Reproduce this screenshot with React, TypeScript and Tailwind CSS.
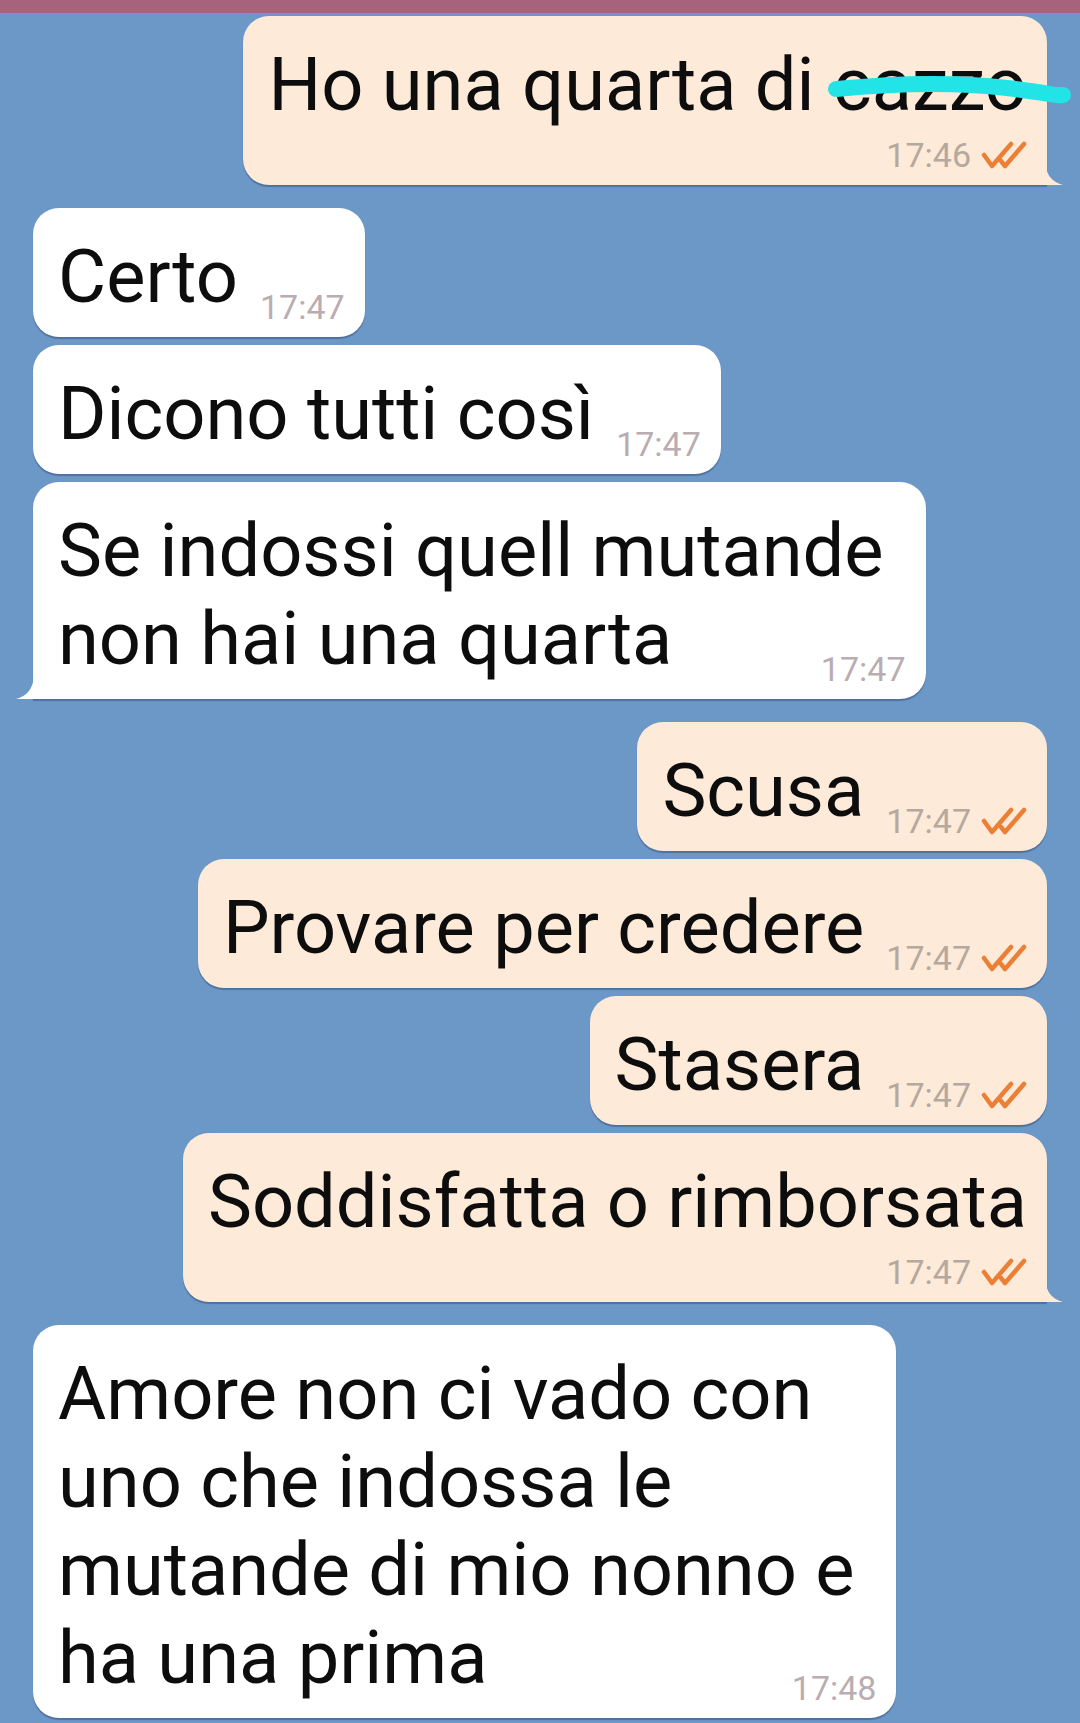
import clsx from "clsx";

type Msg = {
  out: boolean;
  lines: string[];
  time: string;
  below?: boolean;
  tail?: boolean;
  gap: "sm" | "lg" | "none";
};

const messages: Msg[] = [
  { out: true, lines: ["Ho una quarta di cazzo"], time: "17:46", below: true, tail: true, gap: "none" },
  { out: false, lines: ["Certo"], time: "17:47", gap: "lg" },
  { out: false, lines: ["Dicono tutti così"], time: "17:47", gap: "sm" },
  { out: false, lines: ["Se indossi quell mutande", "non hai una quarta"], time: "17:47", tail: true, gap: "sm" },
  { out: true, lines: ["Scusa"], time: "17:47", gap: "lg" },
  { out: true, lines: ["Provare per credere"], time: "17:47", gap: "sm" },
  { out: true, lines: ["Stasera"], time: "17:47", gap: "sm" },
  { out: true, lines: ["Soddisfatta o rimborsata"], time: "17:47", below: true, tail: true, gap: "sm" },
  {
    out: false,
    lines: ["Amore non ci vado con", "uno che indossa le", "mutande di mio nonno e", "ha una prima"],
    time: "17:48",
    gap: "lg",
  },
];

function Checks() {
  return (
    <svg width="46" height="28" viewBox="0 0 46 28" className="ml-[10px] shrink-0">
      <path d="M3 14 L11 25 L30 3" fill="none" stroke="#ec7f36" strokeWidth="4.5" strokeLinecap="round" strokeLinejoin="round" />
      <path d="M20 20 L24 25 L43 3" fill="none" stroke="#ec7f36" strokeWidth="4.5" strokeLinecap="round" strokeLinejoin="round" />
    </svg>
  );
}

function Time({ out, time }: { out: boolean; time: string }) {
  return (
    <span className="flex shrink-0 items-end">
      <span className={clsx("text-[34px] leading-[27px]", out ? "text-[#b5a89e]" : "text-[#b9adb2]")}>{time}</span>
      {out && <Checks />}
    </span>
  );
}

function Tail({ out }: { out: boolean }) {
  if (out) {
    return (
      <svg width="18" height="22" viewBox="0 0 18 22" className="absolute bottom-0 right-[-16px]">
        <path d="M0 0 Q2 18 18 22 L0 22 Z" fill="#fdead8" />
      </svg>
    );
  }
  return (
    <svg width="18" height="22" viewBox="0 0 18 22" className="absolute bottom-0 left-[-17px]">
      <path d="M18 0 Q16 18 0 22 L18 22 Z" fill="#ffffff" />
    </svg>
  );
}

function Bubble({ m, index }: { m: Msg; index: number }) {
  const last = m.lines[m.lines.length - 1];
  const multi = m.lines.length > 1;
  return (
    <div
      className={clsx(
        "relative w-fit rounded-[26px] pb-[16px] pl-[25px] pr-[20px] pt-[25px] shadow-[0_2px_1px_rgba(35,55,95,0.4)]",
        m.out ? "self-end bg-[#fdead8]" : "self-start bg-white",
        m.tail && m.out && "rounded-br-none",
        m.tail && !m.out && "rounded-bl-none",
        m.gap === "sm" && "mt-[8px]",
        m.gap === "lg" && "mt-[23px]"
      )}
    >
      {m.lines.slice(0, -1).map((l) => (
        <div key={l} className={clsx("whitespace-nowrap", multi && "pr-[22px]")}>
          {l}
        </div>
      ))}
      {m.below ? (
        <>
          <div className="whitespace-nowrap">{last}</div>
          <div className="flex h-[40px] items-end justify-end">
            <Time out={m.out} time={m.time} />
          </div>
        </>
      ) : (
        <div className="flex items-end">
          <span className="whitespace-nowrap">{last}</span>
          <span className="ml-auto pl-[22px]">
            <Time out={m.out} time={m.time} />
          </span>
        </div>
      )}
      {m.tail && <Tail out={m.out} />}
      {index === 0 && (
        // scribble over the last word
        <svg width="250" height="44" viewBox="0 0 250 44" className="absolute right-[-30px] top-[55px]">
          <path
            d="M9 18 C70 12 130 11 180 17 S226 25 236 24"
            fill="none"
            stroke="#22e4e6"
            strokeWidth="16"
            strokeLinecap="round"
          />
        </svg>
      )}
    </div>
  );
}

export default function App() {
  return (
    <div className="h-[1723px] w-[1080px] overflow-hidden bg-[#6c98c8] font-['Roboto',sans-serif] text-[74px] leading-[88px] text-[#0d0d0d]">
      <div className="h-[13px] bg-[#a8637c]" />
      <div className="flex flex-col px-[33px] pt-[3px]">
        {messages.map((m, i) => (
          <Bubble key={i} m={m} index={i} />
        ))}
        <div className="mt-[7px] h-[120px] w-[590px] self-start rounded-[26px] bg-white" />
      </div>
    </div>
  );
}
